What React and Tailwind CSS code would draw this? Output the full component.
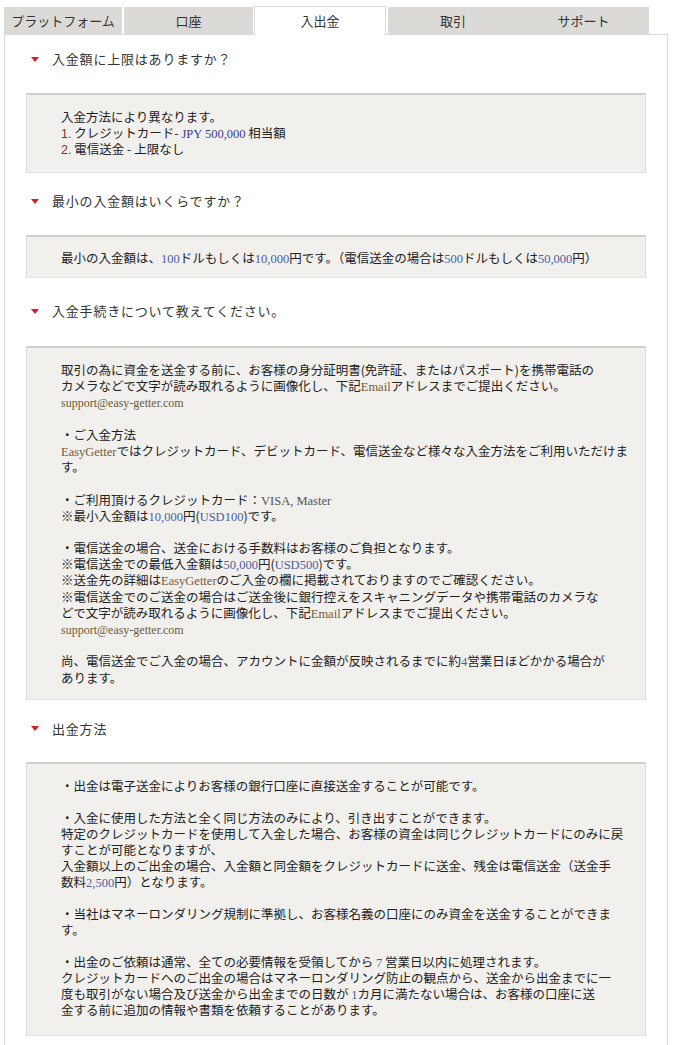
import React from 'react';

const tabs = [
  { label: 'プラットフォーム', w: 'w-[118px]' },
  { label: '口座', w: 'w-[129px]' },
  { label: '入出金', w: 'w-[132px]', active: true },
  { label: '取引', w: 'w-[130px]' },
  { label: 'サポート', w: 'w-[131px]' },
];

const N = ({ children }) => (
  <span className="font-['Liberation_Serif',serif] text-[12.5px] text-[#4a5ea0]">{children}</span>
);

const L = ({ children }) => (
  <span className="font-['Liberation_Serif',serif] text-[12.5px] text-[#7a5a3a]">{children}</span>
);

const R = ({ children }) => (
  <span className="font-['Liberation_Sans',sans-serif] text-[#8c2b2b]">{children}</span>
);

const Email = () => (
  <span className="font-['Liberation_Serif',serif] text-[12px] text-[#6b5a3a]">support@easy-getter.com</span>
);

const Heading = ({ children, className }) => (
  <div className={`flex items-center pl-[5px] ${className}`}>
    <svg width="8" height="5" viewBox="0 0 8 5" className="shrink-0">
      <polygon points="0,0 8,0 4,5" fill="#d0202a" />
    </svg>
    <span className="ml-[13px] text-[13px] tracking-[0.8px] text-[#333]">{children}</span>
  </div>
);

const Box = ({ lines, className, lh = 'h-[16px]' }) => (
  <div
    className={`border-t-2 border-t-[#cfcfcd] border-x border-b border-x-[#dedddb] border-b-[#e4e3e0] bg-[#f1f0ed] pl-[34px] pr-4 text-[12.5px] text-[#222] whitespace-nowrap ${className}`}
  >
    {lines.map((line, i) => (
      <div key={i} className={`${lh} leading-[16px]`}>
        {line}
      </div>
    ))}
  </div>
);

const box1 = [
  '入金方法により異なります。',
  <>
    <R>1.</R> クレジットカード- <span className="font-['Liberation_Serif',serif] text-[#3c3c8c]">JPY 500,000</span> 相当額
  </>,
  <>
    <R>2.</R> 電信送金 - 上限なし
  </>,
];

const box2 = [
  <>
    最小の入金額は、<N>100</N>ドルもしくは<N>10,000</N>円です。（電信送金の場合は<N>500</N>ドルもしくは<N>50,000</N>円）
  </>,
];

const box3 = [
  '取引の為に資金を送金する前に、お客様の身分証明書(免許証、またはパスポート)を携帯電話の',
  <>
    カメラなどで文字が読み取れるように画像化し、下記<L>Email</L>アドレスまでご提出ください。
  </>,
  <Email />,
  '',
  '・ご入金方法',
  <>
    <L>EasyGetter</L>ではクレジットカード、デビットカード、電信送金など様々な入金方法をご利用いただけま
  </>,
  'す。',
  '',
  <>
    ・ご利用頂けるクレジットカード：<span className="font-['Liberation_Serif',serif] text-[#555]">VISA, Master</span>
  </>,
  <>
    ※最小入金額は<N>10,000</N>円(<N>USD100</N>)です。
  </>,
  '',
  '・電信送金の場合、送金における手数料はお客様のご負担となります。',
  <>
    ※電信送金での最低入金額は<N>50,000</N>円(<N>USD500</N>)です。
  </>,
  <>
    ※送金先の詳細は<L>EasyGetter</L>のご入金の欄に掲載されておりますのでご確認ください。
  </>,
  '※電信送金でのご送金の場合はご送金後に銀行控えをスキャニングデータや携帯電話のカメラな',
  <>
    どで文字が読み取れるように画像化し、下記<L>Email</L>アドレスまでご提出ください。
  </>,
  <Email />,
  '',
  <>
    尚、電信送金でご入金の場合、アカウントに金額が反映されるまでに約<N>4</N>営業日ほどかかる場合が
  </>,
  'あります。',
];

const box4 = [
  '・出金は電子送金によりお客様の銀行口座に直接送金することが可能です。',
  '',
  '・入金に使用した方法と全く同じ方法のみにより、引き出すことができます。',
  '特定のクレジットカードを使用して入金した場合、お客様の資金は同じクレジットカードにのみに戻',
  'すことが可能となりますが、',
  '入金額以上のご出金の場合、入金額と同金額をクレジットカードに送金、残金は電信送金（送金手',
  <>
    数料<N>2,500</N>円）となります。
  </>,
  '',
  '・当社はマネーロンダリング規制に準拠し、お客様名義の口座にのみ資金を送金することができま',
  'す。',
  '',
  <>
    ・出金のご依頼は通常、全ての必要情報を受領してから <N>7</N> 営業日以内に処理されます。
  </>,
  'クレジットカードへのご出金の場合はマネーロンダリング防止の観点から、送金から出金までに一',
  <>
    度も取引がない場合及び送金から出金までの日数が <N>1</N>カ月に満たない場合は、お客様の口座に送
  </>,
  '金する前に追加の情報や書類を依頼することがあります。',
];

export default function App() {
  return (
    <div className="w-[675px] h-[1045px] overflow-hidden bg-white font-['Noto_Sans_CJK_JP',sans-serif]">
      <div className="flex pl-[4px] pt-[6px]">
        {tabs.map((t, i) =>
          t.active ? (
            <div
              key={i}
              className={`${t.w} h-[29px] -mb-px z-10 ml-[1px] flex items-center justify-center bg-white border border-[#d9d9d9] border-b-0 text-[13px] text-[#333]`}
            >
              {t.label}
            </div>
          ) : (
            <div
              key={i}
              className={`${t.w} h-[27px] mt-[1px] flex items-center justify-center bg-[#dcdad6] text-[13px] text-[#333] ${i === 1 || i === 3 ? 'ml-[2px]' : ''}`}
            >
              {t.label}
            </div>
          )
        )}
      </div>

      <div className="ml-[4px] w-[664px] h-[1020px] border border-[#d9d9d9] border-b-0 px-[21px]">
        <Heading className="h-[58px] pb-[10px]">入金額に上限はありますか？</Heading>
        <Box lines={box1} className="pt-[14px] pb-[15px]" />

        <Heading className="h-[62px] pb-[6px]">最小の入金額はいくらですか？</Heading>
        <Box lines={box2} className="pt-[13px] pb-[11px]" />

        <Heading className="h-[68px] pb-[2px]">入金手続きについて教えてください。</Heading>
        <Box lines={box3} lh="h-[16.2px]" className="pt-[14px] pb-[13px]" />

        <Heading className="h-[62px] pb-[4px]">出金方法</Heading>
        <Box lines={box4} className="pt-[14px] pb-[17px]" />
      </div>
    </div>
  );
}
